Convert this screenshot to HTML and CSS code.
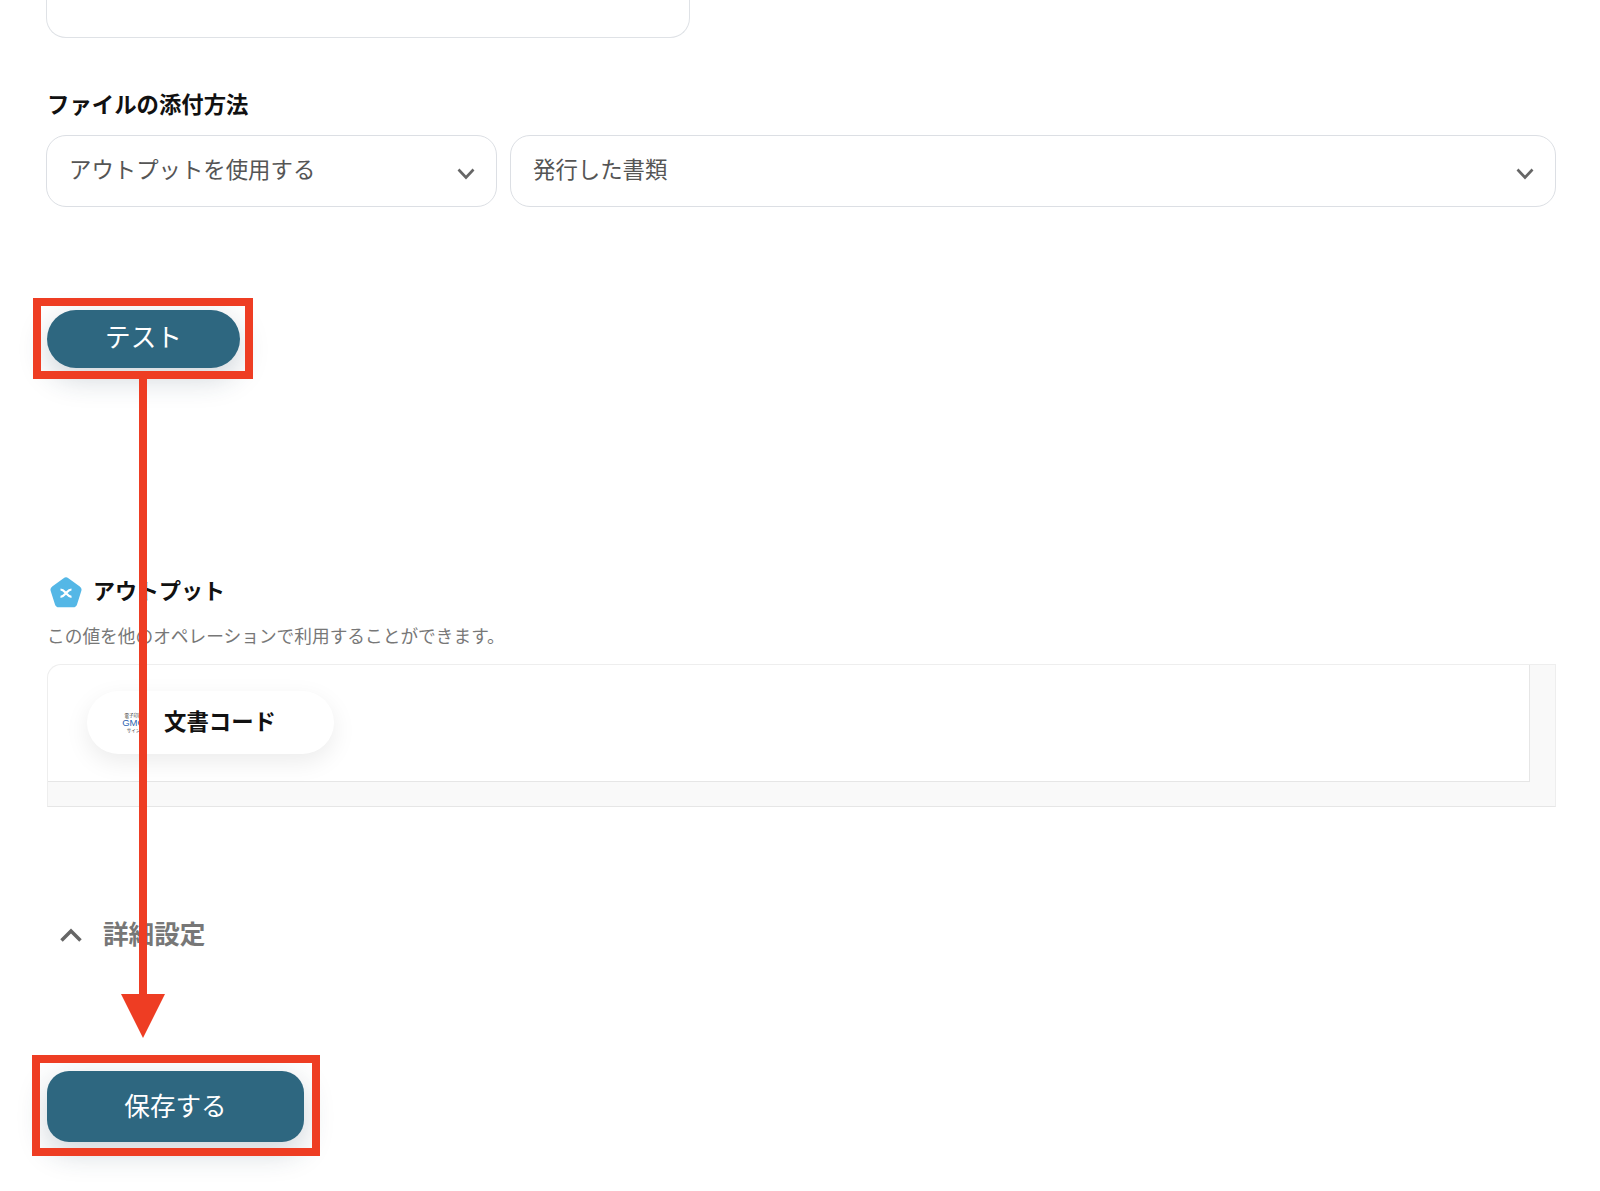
FILE: index.html
```html
<!DOCTYPE html>
<html lang="ja">
<head>
  <meta charset="UTF-8" />
  <title>アウトプット設定</title>
  <link rel="stylesheet" href="styles.css">
</head>
<body>
  <div class="page">
    <div class="input-tail"></div>

    <div class="field-label">ファイルの添付方法</div>
    <div class="select-row">
      <div class="select select-short">
        <span>アウトプットを使用する</span>
        <svg class="chevron" viewBox="0 0 18 12"><path d="M1.500 1.500l7.500 8 7.500-8"/></svg>
      </div>
      <div class="select select-wide">
        <span>発行した書類</span>
        <svg class="chevron" viewBox="0 0 18 12"><path d="M1.500 1.500l7.500 8 7.500-8"/></svg>
      </div>
    </div>

    <div class="btn-wrap test-wrap">
      <button class="btn btn-test">テスト</button>
      <div class="red-box"></div>
    </div>

    <div class="output-title">
      <svg class="output-icon" viewBox="0 0 32 32">
        <path class="pentagon" d="M13.600 1.200a4 4 0 0 1 4.800 0l11.400 8.300a4 4 0 0 1 1.500 4.500l-4.300 13.400a4 4 0 0 1-3.900 2.800H8.900A4 4 0 0 1 5 27.400L.7 14a4 4 0 0 1 1.500-4.500z"/>
        <path class="cross" d="M10.500 12.500c2.500 0 3.300 1.200 5.500 3.700s3 3.700 5.500 3.700M21.500 12.500c-2.500 0-3.300 1.200-5.500 3.700s-3 3.700-5.500 3.700"/>
      </svg>
      <span>アウトプット</span>
    </div>
    <div class="output-desc">この値を他のオペレーションで利用することができます。</div>

    <div class="output-box">
      <div class="output-inner">
        <div class="pill">
          <div class="gmo-logo">
            <span class="gmo-small">電子印鑑</span>
            <span class="gmo-main">GMO</span>
            <span class="gmo-small">サイン</span>
          </div>
          <span class="pill-text">文書コード</span>
        </div>
      </div>
    </div>

    <div class="detail-row">
      <svg class="chevron-up" viewBox="0 0 24 16"><path d="M2.500 13.500L12 4l9.500 9.500"/></svg>
      <span>詳細設定</span>
    </div>

    <div class="btn-wrap save-wrap">
      <button class="btn btn-save">保存する</button>
      <div class="red-box"></div>
    </div>
  </div>

  <!-- red arrow from test button down to save button -->
  <svg class="arrow" viewBox="0 0 44 659">
    <path d="M18 0h8v615h18L22 659 0 615h18z"/>
  </svg>
</body>
</html>
```

FILE: styles.css
```css
html, body {
  margin: 0;
  height: 1191px;
  overflow: hidden;
  background: #fff;
}

body {
  position: relative;
  font-family: "Noto Sans CJK JP", "Noto Sans", sans-serif;
  color: #111;
}

.page {
  padding: 0 44px 0 47px;
}

.input-tail {
  width: 644px;
  height: 38px;
  margin-left: -1px;
  box-sizing: border-box;
  border: 1px solid #dfe2e6;
  border-top: none;
  border-radius: 0 0 20px 20px;
}

.field-label {
  margin-top: 49px;
  font-size: 22.400px;
  font-weight: 700;
  line-height: 32px;
}

.select-row {
  display: flex;
  gap: 13px;
  margin-top: 16px;
  margin-left: -1px;
}

.select {
  height: 72px;
  box-sizing: border-box;
  display: flex;
  align-items: center;
  justify-content: space-between;
  padding: 0 21px 0 22px;
  border: 1px solid #dcdfe4;
  border-radius: 20px;
  font-size: 22.400px;
  color: #555;
}

.select span {
  padding-bottom: 6px;
}

.select-short {
  width: 451px;
}

.select-wide {
  flex: 1;
}

.chevron {
  width: 18px;
  height: 12px;
  margin-top: 6px;
  fill: none;
  stroke: #666;
  stroke-width: 2.600;
}

.btn-wrap {
  position: relative;
}

.test-wrap {
  width: 193px;
  height: 58px;
  margin-top: 103px;
}

.save-wrap {
  width: 257px;
  height: 71px;
  margin-top: 116px;
}

.btn {
  width: 100%;
  height: 100%;
  display: block;
  border: none;
  color: #fff;
  font-family: inherit;
  font-size: 25.600px;
  background: #2e6780;
  box-shadow: 0 10px 30px rgba(30, 60, 80, 0.22);
}

.btn-test {
  border-radius: 29px;
  padding-bottom: 9px;
}

.btn-save {
  border-radius: 22px;
  padding-bottom: 6px;
}

.red-box {
  position: absolute;
  box-sizing: border-box;
  top: -12px;
  left: -14px;
  right: -13px;
  bottom: -11px;
  border: 8px solid #ee3d23;
}

.save-wrap .red-box {
  top: -16px;
  left: -15px;
  right: -16px;
  bottom: -14px;
}

.output-title {
  display: flex;
  align-items: center;
  gap: 11px;
  height: 32px;
  margin-top: 207px;
  padding-left: 3px;
  font-size: 22px;
  font-weight: 700;
}

.output-title span {
  padding-bottom: 5px;
}

.output-icon {
  width: 32px;
  height: 32px;
  margin-top: 3px;
}

.pentagon {
  fill: #54b7e6;
}

.cross {
  fill: none;
  stroke: #fff;
  stroke-width: 2.200;
}

.output-desc {
  margin-top: 15px;
  font-size: 17.700px;
  line-height: 26px;
  color: #777;
}

.output-box {
  height: 143px;
  margin-top: 16px;
  box-sizing: border-box;
  background: #f9f9f9;
  border: 1px solid #eee;
  border-bottom-color: #e6e6e6;
  border-top-left-radius: 14px;
}

.output-inner {
  width: 1482px;
  height: 117px;
  box-sizing: border-box;
  background: #fff;
  border-right: 1px solid #e6e6e6;
  border-bottom: 1px solid #e6e6e6;
  border-top-left-radius: 14px;
  padding: 26px 0 0 39px;
}

.pill {
  width: 247px;
  height: 63px;
  box-sizing: border-box;
  display: flex;
  align-items: center;
  gap: 18px;
  padding-left: 34px;
  border-radius: 32px;
  background: #fff;
  box-shadow: 0 8px 24px rgba(0, 0, 0, 0.08);
  font-size: 22.400px;
  font-weight: 700;
}

.pill-text {
  padding-bottom: 6px;
}

.gmo-logo {
  width: 25px;
  display: flex;
  flex-direction: column;
  align-items: center;
  line-height: 6px;
  white-space: nowrap;
}

.gmo-main {
  font-family: "Liberation Sans", sans-serif;
  font-size: 9.500px;
  font-weight: 400;
  color: #2b5fb0;
  line-height: 9px;
}

.gmo-small {
  font-size: 4.500px;
  font-weight: 400;
  color: #333;
}

.detail-row {
  display: flex;
  align-items: center;
  gap: 20px;
  height: 40px;
  margin-top: 108px;
  padding-left: 12px;
  font-size: 25.600px;
  font-weight: 700;
  color: #777;
}

.detail-row span {
  padding-bottom: 5px;
}

.chevron-up {
  width: 24px;
  height: 16px;
  fill: none;
  stroke: #666;
  stroke-width: 3.500;
}

.arrow {
  position: absolute;
  left: 121px;
  top: 379px;
  width: 44px;
  height: 659px;
  fill: #ee3d23;
}
```
